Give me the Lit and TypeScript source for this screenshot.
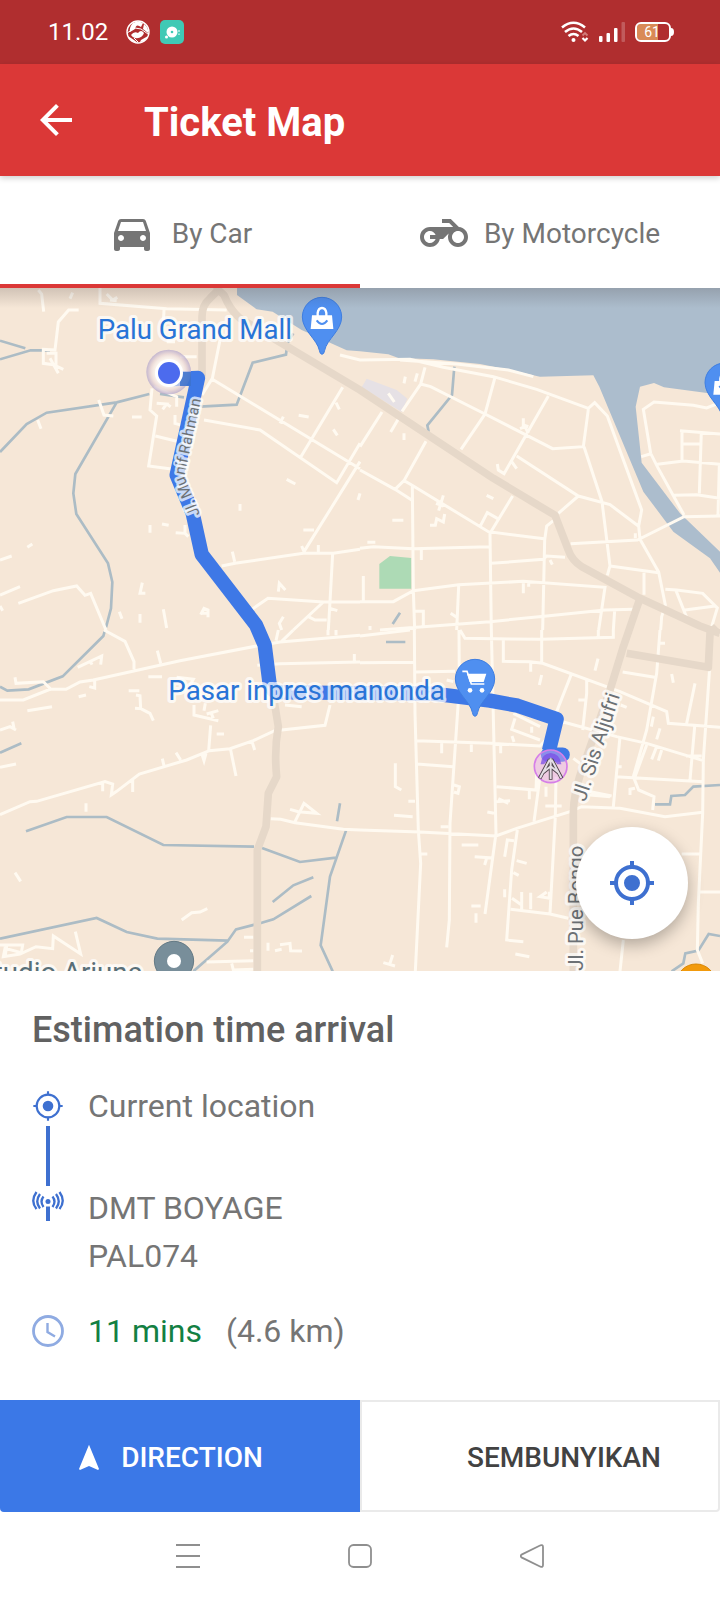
import { LitElement, html, svg, css } from "lit";
import { customElement, property, state } from "lit/decorators.js";
import { classMap } from "lit/directives/class-map.js";

/* Map geometry, three drawing units per pixel, in four tiles of 1080 x 1050. */
interface Tile {
  x: number;
  y: number;
  streets: string;
  streams: string;
}

const tiles: Tile[] = [
  {
    x: 0,
    y: 0,
    streets: `M300 20V70L500 86L680 90 M115 30L125 42L131 95 M218 38L210 56 M320 42L338 60L352 52M330 60L350 62
      M236 90H206L175 126L165 210L130 208V250L160 254L190 268M140 220H168V262M150 235L175 280
      M492 90L490 130 M500 185H525 M660 180L637 295L606 345 M637 298L1080 566 M612 420L780 450L1010 608L1080 490
      M1028 322L900 535 M1008 368L1018 388 M850 410L840 430 M896 406L926 411 M1000 448L1012 466 M860 598L886 612 M1080 640L1074 660
      M456 325L450 390L470 408L446 558L520 568 M466 468L540 486 M462 320L530 350V380 M470 370L500 372L488 388M500 372L512 380
      M540 230H590 M525 405V430L560 440 M296 360L312 405L340 408 M396 411H425 M113 420L123 446 M720 672V692
      M1080 545L912 815 M910 750H942 M955 795V816 M665 858L705 850L910 820H1000L1080 808 M697 815L704 845 M905 798L912 815
      M998 820L990 965L985 1050 M750 992L804 955L970 966H1080 M970 966L880 1050 M990 985L1012 992 M925 1010L945 1020H980
      M835 935L838 910L856 930 M850 1010L838 1030L845 1050 M450 735V758 M486 732L506 736 M527 758L555 760L565 770M555 735V758
      M97 792L82 802 M0 840L35 828 M0 945L60 920 M55 970L160 932L230 918L255 946L272 940L318 1050 M0 978L8 992
      M427 908L420 940H436 M420 1002V1028 M490 988L500 1044 M358 995L366 1016 M602 1004L612 985L624 990V1012M606 1000H620`,
    streams: `M0 238L92 211H150 M0 182L76 205 M0 516L80 432L140 398L350 367L448 342 M350 367L226 582L220 640L229 702L324 850L337 906L333 985L318 1042
      M480 342L552 352 M600 380L710 374L758 248L858 224L862 190L880 160`,
  },
  {
    x: 1080,
    y: 0,
    streets: `M-60 225L0 240L150 238L250 262L400 290L530 328L685 385L704 368L742 408L845 690L836 738L840 778L896 876L916 975L905 1010L902 1050
      M120 240L290 252L445 270L520 290 M195 262L182 312L126 394 M182 312L212 320L375 402L578 506L670 500L685 388 M405 292L375 402L303 508
      M565 348L430 585 M470 528L655 648L750 674L835 738 M672 500L726 665L750 858L742 886 M655 648L595 700
      M0 500L66 396 M92 456L118 412 M132 460V480 M136 290L132 310 M172 280L165 305 M85 340L103 366
      M0 570L105 628L155 660 M198 484L132 602L105 628 M132 602L155 615L385 755L552 776 M157 615L160 930L164 1050
      M458 648L390 760L392 910L394 1050 M360 740L382 698L412 715 M580 722L560 738L554 780L548 1050 M380 646L400 656
      M250 646L236 692M228 670L250 678 M210 736H226L230 716L250 726L254 702 M97 721H130 M22 787H46 M490 415V435L505 440M480 446L495 440L505 460
      M412 552L415 570L430 580M455 545L470 566 M0 805L40 800L160 806L388 800 M184 806V840 M394 850L550 838L560 828L615 832M570 840L577 854
      M0 965H100L160 932L296 914L490 904L735 922L716 1050 M10 888V962 M296 918L290 1050 M490 910V940M506 908V920
      M60 1050L390 1025L560 1008L735 990L820 988 M764 992L760 1050 M166 994H190V1040 M272 1000L290 1012 M30 1038V1050
      M632 791L832 780L972 710L1080 708 M750 858L896 878 M852 878V944 M826 760V775 M1080 368L1040 384L1000 376L882 366L850 388L872 520L892 560L972 705
      M844 530L870 522 M892 553L970 543L1080 553 M960 452L1080 462M966 452V540 M966 492H1020 M1024 455L1018 640 M942 646L1010 644L1080 655 M1078 556L1074 704
      M916 928L950 930L1028 940L1072 984L1055 1040 M948 932L980 1012 M975 990L1065 978`,
    streams: `M283 260L276 345L202 436L206 455 M120 998L98 1032`,
  },
  {
    x: 0,
    y: 1050,
    streets: `M312 0L375 34L402 95V118 M0 210H70L150 178H198L240 156L280 150L540 92L770 48L840 36L1080 16 M835 0L828 32 M880 0L845 34 M984 0V16M1008 0V16
      M772 106L840 101L1080 96 M1063 72V94 M45 142L48 160L130 155L155 180 M233 112L305 78L302 104M270 92L276 104 M284 150V174L268 170
      M472 62L482 100 M445 140H486 M236 200L258 195 M82 242L156 230 M386 182H418 M408 195L420 197L422 236L405 235M422 236L450 250L460 272
      M530 142L580 148L570 165 M582 225V255L655 272 M616 220L612 242M620 252L655 242M632 245L640 265 M650 312H672 M632 286L626 362
      M0 300L30 290L48 300M38 275L42 295 M0 412L48 402 M0 554L90 515L110 514L315 455L338 462L334 495L350 484L418 432L560 390L628 362L690 356L760 332L824 302L975 286L990 225
      M308 460V484 M398 450V486 M487 386L492 408 M528 368L542 390 M605 370L612 392L618 370 M692 360L708 438 M756 334L764 360 M855 225L905 230
      M258 520V545 M45 728L62 754 M812 566L842 568L885 578L1030 598L1080 600 M885 575L912 520L950 550L895 545L870 538
      M545 870L575 848L600 846L622 836 M0 945H68L64 968L15 955L10 980L60 972L108 950L158 956L160 918L242 972L226 905M20 948L16 975
      M620 996L760 992M695 1000L700 1020L760 1018 M732 922H760 M804 938V962 M825 962L845 958M840 944L870 940L872 962L906 963 M750 962H760`,
    streams: `M0 170L22 182L86 178L188 139L310 18L314 4 M0 368L64 340 M78 604L200 561H320L490 645L762 650 M786 654L900 696L1008 683 M1038 602L990 740L962 946L998 1024
      M1020 520L1011 574 M818 816L880 766L940 742 M580 1024L682 935L708 898L764 884 M780 880L820 868L934 798 M0 926L290 864L380 906L472 926L684 932`,
  },
  {
    x: 1080,
    y: 1050,
    streets: `M163 0L165 250L175 600L182 700L166 1024 M297 0L298 170L270 580L268 870L260 952 M0 18L150 0M300 0L315 25L545 28L760 22V0
      M394 0L400 260L408 610L375 852 M0 98L160 97 M168 126L285 124 M430 30V94L510 95L548 100L780 185L920 245L925 280L1080 292
      M545 0V96 M512 95V125 M715 0V22 M714 86L705 122 M635 130L580 270 M680 150V190L668 300 M655 210H675 M545 135L538 165
      M900 0L890 130L860 300L820 440L836 480L882 500L878 540 M900 40H915 M788 126L884 142M935 132L940 158 M1050 100L1030 390L1028 550L1015 820L1012 960L1028 1000
      M1005 160L980 280 M1004 290L990 450 M168 332L392 340L540 348L610 276L770 320L860 340L1030 392 M245 340V370 M334 340V366 M422 342V370
      M170 402L280 410 M282 465L298 470L294 490L282 486 M106 400V470L124 480 M145 514H165 M102 556L158 560 M242 590H265 M382 546L402 550
      M410 470L528 480L530 430 M508 482V508 M405 515L450 512M415 506L445 520 M460 250L540 290M465 265L455 298L540 330 M456 318L462 336M515 290V308
      M588 440L586 560L570 850 M558 470V500 M556 528H605 M0 600L180 606L408 618L470 595L630 545L665 530L780 535L915 560L1028 547
      M540 440L522 575 M472 600L455 720L440 930L490 935 M462 632L442 630L434 680 M305 645H355 M344 680L400 684M380 684L374 705 M182 672H202
      M470 692L500 700 M460 728L476 736 M434 778V802 M334 828H362 M348 850V878 M452 838L570 852L625 865 M485 786V838M512 788V838M456 805L485 825
      M568 785V805L540 800L560 786 M466 972L508 980 M70 998L105 1008M98 975L90 1000 M790 930L780 1024 M965 672H1018 M1018 786H1080
      M780 320L760 530 M766 440L1030 455 M665 480L755 498 M690 495L750 500 M810 495V478L825 475 M768 410H785 M782 225L800 232
      M640 385L660 400 M900 295L890 328 M890 350L875 388M905 360L895 392 M880 260L874 290 M860 345L825 440 M978 378H1025 M1060 5L1080 10 M260 150L280 155`,
    streams: `M78 36H136 M885 523H930L934 498L975 495L1000 470L1080 465 M935 1024L970 1000L976 970L1015 962L1046 912L1080 918`,
  },
];

const bagGlyph = svg`<path fill="#fff" d="M-30 -5H30L34 36H-34Z"/><path fill="none" stroke="#fff" stroke-width="7" d="M-13 0V-12Q-11 -27 0 -27T13 -12V0"/><path fill="none" stroke="#4f8ff0" stroke-width="6" d="M-16 10Q0 32 16 10"/>`;
const cartGlyph = svg`<path fill="none" stroke="#fff" stroke-width="5" d="M-38 -23H-24L-11 15H28"/><path fill="#fff" d="M-24 -16H34L26 9H-16Z"/><circle cx="-15" cy="34" r="7" fill="#fff"/><circle cx="21" cy="34" r="7" fill="#fff"/>`;
const dotGlyph = svg`<circle r="21" fill="#fff"/>`;

const pin = (x: number, y: number, fill: string, edge: string, glyph: unknown) => svg`
  <g transform="translate(${x} ${y})">
    <path fill=${fill} stroke=${edge} stroke-width="3" d="M0 112Q-6 112 -8 100C-14 68 -59 40 -59 0A59 59 0 0 1 59 0C59 40 14 68 8 100Q6 112 0 112Z"/>
    ${glyph}
  </g>`;

const gpsPath =
  "M12 8a4 4 0 1 0 0 8 4 4 0 0 0 0-8zm8.94 3A8.99 8.99 0 0 0 13 3.06V1h-2v2.06A8.99 8.99 0 0 0 3.06 11H1v2h2.06A8.99 8.99 0 0 0 11 20.94V23h2v-2.06A8.99 8.99 0 0 0 20.94 13H23v-2h-2.06zM12 19a7 7 0 1 1 0-14 7 7 0 0 1 0 14z";

@customElement("status-bar")
export class StatusBar extends LitElement {
  static styles = css`
    :host {
      display: flex;
      align-items: center;
      justify-content: space-between;
      height: 64px;
      padding: 0 46px 0 48px;
      background: #b02e2f;
      color: #fff;
      font-size: 24px;
    }
    .group {
      display: flex;
      align-items: center;
      gap: 10px;
    }
    .clock {
      margin-right: 8px;
    }
    svg {
      display: block;
    }
  `;
  render() {
    return html`
      <div class="group">
        <span class="clock">11.02</span>
        <svg width="24" height="24" viewBox="0 0 24 24" aria-hidden="true">
          <circle cx="12" cy="12" r="11" fill="none" stroke="#fff" stroke-width="1.4" />
          <path fill="#fff" d="M7 3Q12 0 17 3L15 7Q10 3 9 9L4 12Q3 7 7 3Z M18 4Q23 8 22 13L17 9Z M5 15Q8 11 12 13Q15 9 18 13Q16 19 9 18Q7 18 5 15Z M2 16L8 20L12 23Q5 22 2 16Z M15 20L22 16Q19 22 14 22Z" />
          <path fill="none" stroke="#fff" stroke-width="1" d="M1 13L9 8L15 9L22 14M8 18L12 22" />
        </svg>
        <svg width="24" height="24" viewBox="0 0 24 24" aria-hidden="true">
          <rect width="24" height="24" rx="5" fill="#40c9b5" />
          <circle cx="12" cy="12" r="5.5" fill="#fff" />
          <circle cx="12" cy="12" r="1.3" fill="#40c9b5" />
          <circle cx="6.5" cy="17" r="1.5" fill="#fff" />
          <path stroke="#fff" stroke-width="1" d="M19 10V12M19 13.5V15" />
        </svg>
      </div>
      <div class="group">
        <svg width="28" height="22" viewBox="0 0 28 22" aria-hidden="true">
          <g fill="none" stroke="#fff" stroke-width="2.6">
            <path d="M1 6.5Q12.500 -3 24 6.500" />
            <path d="M4 11Q12.500 4 21 11" />
            <path d="M7.500 15Q12.500 11 17.500 15" />
          </g>
          <circle cx="12.5" cy="19" r="2" fill="#fff" />
          <path fill="none" stroke="#d17d7c" stroke-width="1.8" d="M21.500 14.500L24 12L26.500 14.500" />
          <path fill="none" stroke="#fff" stroke-width="2.2" d="M21.500 17L24 19.500L26.500 17" />
        </svg>
        <svg width="26" height="22" viewBox="0 0 26 22" aria-hidden="true">
          <g fill="#fff">
            <rect y="15" width="3.5" height="6" rx="1" />
            <rect x="7.5" y="12" width="3.5" height="9" rx="1" />
            <rect x="15" y="7" width="3.5" height="14" rx="1" />
            <rect x="22.5" y="1" width="3.5" height="20" rx="1" opacity=".22" />
          </g>
        </svg>
        <svg width="39" height="20" viewBox="0 0 39 20" role="img" aria-label="Battery 61%">
          <rect x="1" y="1" width="34" height="18" rx="5" fill="#b02e2f" />
          <path fill="#d98a56" d="M6 2H23V18H6Q2 18 2 14V6Q2 2 6 2Z" />
          <rect x="1" y="1" width="34" height="18" rx="5" fill="none" stroke="#fff" stroke-width="2" />
          <path fill="#fff" d="M36 6Q39 6 39 10T36 14Z" />
          <text x="17" y="15" text-anchor="middle" font-size="14" fill="#fff">61</text>
        </svg>
      </div>
    `;
  }
}

@customElement("route-map")
export class RouteMap extends LitElement {
  static styles = css`
    :host {
      display: block;
      position: relative;
      overflow: hidden;
      background: #f6e7d7;
    }
    .canvas {
      position: absolute;
      inset: 0;
      width: 100%;
      height: 100%;
    }
    .shade {
      position: absolute;
      inset: 0 0 auto;
      height: 20px;
      background: linear-gradient(rgba(60, 50, 50, 0.2), transparent);
    }
    .streets {
      fill: none;
      stroke: #fffaf1;
      stroke-width: 9;
    }
    .streams {
      fill: none;
      stroke: #acbcc5;
      stroke-width: 8;
    }
    .highway {
      fill: none;
      stroke: #e6d8c9;
      stroke-width: 23;
      stroke-linejoin: round;
    }
    .route {
      fill: none;
      stroke: #3e78e6;
      stroke-width: 43;
      stroke-linejoin: round;
    }
    .label {
      paint-order: stroke;
      stroke: rgba(255, 255, 255, 0.72);
      stroke-width: 18;
      stroke-linejoin: round;
    }
    .place {
      fill: #2874d7;
      font-size: 83px;
    }
    .road {
      fill: #6c7175;
      font-size: 61px;
    }
    .lane {
      font-size: 46px;
      stroke-width: 16;
    }
    .studio {
      fill: #596f78;
    }
    .locate {
      position: absolute;
      right: 32px;
      bottom: 32px;
      display: grid;
      place-items: center;
      width: 112px;
      height: 112px;
      padding: 0;
      border: 0;
      border-radius: 50%;
      background: #fff;
      color: #3e70d0;
      box-shadow: 0 6px 16px rgba(0, 0, 0, 0.28);
    }
  `;
  render() {
    return html`
      <svg class="canvas" viewBox="0 24 2160 2049" preserveAspectRatio="xMidYMid slice" role="img" aria-label="Route map">
        <defs>
          <radialGradient id="halo">
            <stop offset="0.6" stop-color="#fff" stop-opacity=".5" />
            <stop offset="0.8" stop-color="#e8d6d8" stop-opacity=".7" />
            <stop offset="1" stop-color="#b3a6cc" stop-opacity=".75" />
          </radialGradient>
        </defs>
        <path fill="#acbdcd" d="M711 0V45L770 88L818 95L905 150L1040 211L1080 214L1165 223L1195 234L1300 238L1440 252L1530 270L1620 290L1780 286L1798 320L1930 635L2020 755L2130 835L2160 878V815L2040 700L1925 548L1907 380L1920 320L1962 309L1992 322L2160 344V0Z" />
        <path fill="#e6e1e5" d="M1085 322L1100 296L1190 330L1222 356L1205 396Z" />
        <path fill="#addab5" d="M1138 852L1170 828L1234 834V926H1138Z" />
        ${tiles.map(
          (t) => svg`<g transform="translate(${t.x} ${t.y})">
            <path class="streams" d=${t.streams}/>
            <path class="streets" d=${t.streets}/>
          </g>`
        )}
        <path class="highway" d="M606 290V110Q606 75 630 55L655 30L672 45Q690 90 720 115L1080 330L1480 595L1665 706L1705 810Q1715 840 1745 860L1920 955L2100 1038L2160 1060M655 30L640 0" />
        <path class="highway" d="M1920 955L1870 1100L1830 1230L1760 1430Q1720 1530 1720 1600V2080" />
        <path class="highway" d="M1880 1120L2125 1162L2130 1060L2150 1040" />
        <path class="highway" d="M812 1200L835 1340Q822 1410 830 1490L805 1540L798 1640L772 1710V2080" />
        <path class="route" d="M520 297L594 294L530 585L578 700L605 823L768 1035L794 1095L808 1205Q812 1237 840 1237L1300 1241L1470 1262L1553 1277L1670 1317L1647 1412" />
        <path class="route" stroke-linecap="round" d="M1644 1424H1688" />

        <circle cx="506" cy="276" r="67" fill="url(#halo)" />
        <path fill="#3c72cc" d="M540 276H573V318H540Z" fill-opacity=".85" />
        <circle cx="507" cy="279" r="42" fill="#fff" />
        <circle cx="507" cy="279" r="33" fill="#4c6bee" />

        <g transform="translate(1652 1459)">
          <circle r="49" fill="#e6a8f0" fill-opacity=".45" stroke="#d67fe8" stroke-width="5" />
          <path fill="#7b4ee6" fill-opacity=".75" d="M-30 -6Q-28 -38 0 -40Q28 -38 32 -6L20 -6L0 -28L-20 -6Z" />
          <path fill="none" stroke="#4b4148" stroke-width="11" d="M0 -24V40M-3 -20L-33 36M3 -20L33 36M-22 18L0 0L22 18" />
          <path fill="none" stroke="#e4dde4" stroke-width="6" d="M0 -24V38M-3 -20L-32 35M3 -20L32 35M-22 18L0 0L22 18" />
        </g>

        <path id="munif" fill="none" d="M600 703L553 590L606 345" />
        <text class="label road lane"><textPath href="#munif">Jl. Munif Rahman</textPath></text>
        <text class="label road" transform="translate(1756 1567) rotate(-72)">Jl. Sis Aljufri</text>
        <text class="label road" transform="translate(1750 2072) rotate(-90)">Jl. Pue Bongo</text>
        <text class="label place" x="293" y="177">Palu Grand Mall</text>
        <text class="label place" x="505" y="1260">Pasar inpres manonda</text>
        <text class="label place studio" x="428" y="2105" text-anchor="end">Studio Arjuna</text>

        ${pin(966, 111, "#4f8ff0", "#3f7ee0", bagGlyph)} ${pin(2174, 308, "#4f8ff0", "#3f7ee0", bagGlyph)}
        ${pin(1425, 1197, "#4f8ff0", "#3f7ee0", cartGlyph)} ${pin(522, 2043, "#788e9a", "#647a85", dotGlyph)}
        ${pin(2088, 2111, "#f29a0c", "#d98806", dotGlyph)}
      </svg>
      <div class="shade"></div>
      <button class="locate" aria-label="My location">
        <svg width="48" height="48" viewBox="0 0 24 24" fill="currentColor"><path d=${gpsPath} /></svg>
      </button>
    `;
  }
}

@customElement("arrival-card")
export class ArrivalCard extends LitElement {
  @property() site = "DMT BOYAGE";
  @property() code = "PAL074";
  @property() duration = "11 mins";
  @property() distance = "(4.6 km)";

  static styles = css`
    :host {
      display: block;
      background: #fff;
      color: #757575;
      font-size: 32px;
      line-height: 48px;
      border-radius: 4px;
    }
    .body {
      padding: 35px 32px 44px;
    }
    h2 {
      margin: 0 0 28px;
      color: #616161;
      font-size: 36px;
      line-height: 48px;
      font-weight: 500;
    }
    .trip {
      display: grid;
      grid-template-columns: 32px 1fr;
      column-gap: 24px;
    }
    .rail {
      display: flex;
      flex-direction: column;
      align-items: center;
      gap: 4px;
      padding-top: 8px;
      color: #3e70d0;
    }
    .stem {
      width: 4px;
      height: 60px;
      background: currentColor;
    }
    .stops {
      display: flex;
      flex-direction: column;
      gap: 54px;
    }
    .eta {
      display: flex;
      align-items: center;
      gap: 24px;
      margin-top: 27px;
      padding-bottom: 1px;
    }
    .time {
      color: #138043;
    }
    svg {
      display: block;
    }
    .actions {
      display: grid;
      grid-template-columns: 1fr 1fr;
    }
    .action {
      display: flex;
      align-items: center;
      justify-content: center;
      gap: 16px;
      height: 112px;
      border: 2px solid #eaeaea;
      background: #fff;
      color: #424242;
      font: 500 28px/32px Roboto, sans-serif;
      padding: 4px 0 0 48px;
      border-radius: 0 0 4px 0;
    }
    .primary {
      padding: 4px 24px 0 0;
      border-color: #3b78e7;
      background: #3b78e7;
      color: #fff;
      border-radius: 0 0 0 4px;
    }
  `;
  render() {
    return html`
      <div class="body">
        <h2>Estimation time arrival</h2>
        <div class="trip">
          <div class="rail">
            <svg width="32" height="32" viewBox="0 0 24 24" fill="none" stroke="currentColor" stroke-width="1.6" aria-hidden="true">
              <circle cx="12" cy="12" r="8.5" />
              <circle cx="12" cy="12" r="4" fill="currentColor" stroke="none" />
              <path d="M12 1V4M12 20V23M1 12H4M20 12H23" />
            </svg>
            <div class="stem"></div>
            <svg width="32" height="32" viewBox="0 0 32 32" fill="none" stroke="currentColor" stroke-width="2.3" aria-hidden="true">
              <circle cx="16" cy="11.5" r="2.5" fill="currentColor" stroke="none" />
              <path stroke-width="4" d="M16 16.500V31" />
              <path d="M11.500 6.500Q7.500 11.500 11.500 17M8 4Q2.500 11.500 8 18.500M4.500 2Q-2 11 4.500 19M20.500 6.500Q24.500 11.500 20.500 17M24 4Q29.500 11.500 24 18.500M27.500 2Q34 11 27.500 19" />
            </svg>
          </div>
          <div class="stops">
            <div>Current location</div>
            <div>
              <div>${this.site}</div>
              <div>${this.code}</div>
            </div>
          </div>
        </div>
        <div class="eta">
          <svg width="32" height="32" viewBox="0 0 32 32" fill="none" stroke="#8fabe2" stroke-width="2.8" aria-hidden="true">
            <circle cx="16" cy="16" r="14.5" />
            <path stroke-width="2.4" d="M15.500 8V17L23 21.500" />
          </svg>
          <span class="time">${this.duration}</span>
          <span>${this.distance}</span>
        </div>
      </div>
      <div class="actions">
        <button class="action primary">
          <svg width="32" height="32" viewBox="0 0 24 24" fill="currentColor" aria-hidden="true"><path d="M12 2L4.500 20.290l.710.710L12 18l6.790 3 .710-.710z" /></svg>
          DIRECTION
        </button>
        <button class="action">SEMBUNYIKAN</button>
      </div>
    `;
  }
}

@customElement("app-root")
export class AppRoot extends LitElement {
  @state() private mode: "car" | "motorcycle" = "car";

  static styles = css`
    :host {
      display: flex;
      flex-direction: column;
      min-height: 100vh;
      background: #fff;
      font-family: Roboto, sans-serif;
    }
    svg {
      display: block;
    }
    button {
      padding: 0;
      border: 0;
      background: none;
      color: inherit;
      font: inherit;
    }
    .header {
      position: relative;
      display: flex;
      align-items: center;
      gap: 64px;
      height: 112px;
      padding: 0 32px;
      background: #db3837;
      color: #fff;
      box-shadow: 0 2px 6px rgba(0, 0, 0, 0.2);
    }
    h1 {
      margin: 0;
      padding-top: 6px;
      font-size: 40px;
      line-height: 48px;
      font-weight: 700;
    }
    .tabs {
      display: grid;
      grid-template-columns: 1fr 1fr;
    }
    .tab {
      display: flex;
      align-items: center;
      justify-content: center;
      gap: 16px;
      height: 112px;
      padding-top: 2px;
      border-top: 4px solid transparent;
      border-bottom: 4px solid transparent;
      color: #757575;
      font-size: 28px;
    }
    .selected {
      border-bottom-color: #db3837;
    }
    route-map {
      flex: 1 0 480px;
    }
    .nav {
      display: flex;
      align-items: center;
      justify-content: center;
      gap: 148px;
      height: 88px;
      color: #8f8f8f;
    }
  `;

  private tab(mode: "car" | "motorcycle", label: string, path: string) {
    const selected = this.mode === mode;
    return html`
      <button class=${classMap({ tab: true, selected })} role="tab" aria-selected=${selected} @click=${() => (this.mode = mode)}>
        <svg width="48" height="48" viewBox="0 0 24 24" fill="currentColor" aria-hidden="true"><path d=${path} /></svg>
        ${label}
      </button>
    `;
  }

  render() {
    return html`
      <status-bar></status-bar>
      <header class="header">
        <button aria-label="Back">
          <svg width="48" height="48" viewBox="0 0 24 24" fill="currentColor"><path d="M20 11H7.830l5.590-5.590L12 4l-8 8 8 8 1.410-1.410L7.830 13H20v-2z" /></svg>
        </button>
        <h1>Ticket Map</h1>
      </header>
      <div class="tabs" role="tablist">
        ${this.tab(
          "car",
          "By Car",
          "M18.92 6.01C18.72 5.42 18.16 5 17.5 5h-11c-.66 0-1.21.42-1.42 1.01L3 12v8c0 .55.45 1 1 1h1c.55 0 1-.45 1-1v-1h12v1c0 .55.45 1 1 1h1c.55 0 1-.45 1-1v-8l-2.08-5.99zM6.5 16c-.83 0-1.5-.67-1.5-1.5S5.67 13 6.5 13s1.5.67 1.5 1.5S7.33 16 6.5 16zm11 0c-.83 0-1.5-.67-1.5-1.5s.67-1.5 1.5-1.5 1.5.67 1.5 1.5-.67 1.5-1.5 1.5zM5 11l1.5-4.5h11L19 11H5z"
        )}
        ${this.tab(
          "motorcycle",
          "By Motorcycle",
          "M19.44 9.03L15.41 5H11v2h3.59l2 2H5c-2.8 0-5 2.2-5 5s2.2 5 5 5c2.46 0 4.45-1.69 4.9-4h1.65l2.77-2.77c-.21.54-.32 1.14-.32 1.77 0 2.8 2.2 5 5 5s5-2.2 5-5c0-2.65-1.97-4.77-4.56-4.97zM7.82 15C7.4 16.15 6.28 17 5 17c-1.63 0-3-1.37-3-3s1.37-3 3-3c1.28 0 2.4.85 2.82 2H5v2h2.82zM19 17c-1.66 0-3-1.34-3-3s1.34-3 3-3 3 1.34 3 3-1.34 3-3 3z"
        )}
      </div>
      <route-map></route-map>
      <arrival-card></arrival-card>
      <nav class="nav" aria-label="System">
        <button aria-label="Recent apps">
          <svg width="24" height="24" viewBox="0 0 24 24" stroke="currentColor" stroke-width="2"><path d="M0 1H24M0 12H24M0 23H24" /></svg>
        </button>
        <button aria-label="Home">
          <svg width="24" height="24" viewBox="0 0 24 24" fill="none" stroke="currentColor" stroke-width="1.8"><rect x="1" y="1" width="22" height="22" rx="4.5" /></svg>
        </button>
        <button aria-label="Back">
          <svg width="24" height="24" viewBox="0 0 24 24" fill="none" stroke="currentColor" stroke-width="1.8"><path d="M1.500 10.600L20.500 1.300Q23 .500 23 3V21Q23 23.500 20.500 22.700L1.500 13.400Q0 12 1.500 10.600Z" /></svg>
        </button>
      </nav>
    `;
  }
}
